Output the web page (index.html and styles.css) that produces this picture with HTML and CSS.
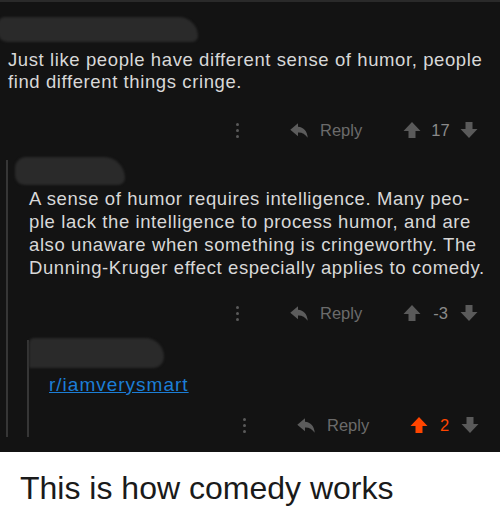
FILE: index.html
```html
<!DOCTYPE html>
<html>
<head>
<meta charset="utf-8">
<link rel="stylesheet" href="styles.css">
</head>
<body>
<div class="dark">
  <div class="comment c1">
    <div class="blob blob1"></div>
    <p class="text">Just like people have different sense of humor, people find different things cringe.</p>
    <div class="actions">
      <span class="dots"><i></i><i></i><i></i></span>
      <span class="reply"><svg class="ricon" viewBox="0 0 18 15"><path d="M8 0.3 L0.3 6.8 L8 13.3 L8 9.6 C12 9.4 15 11 17.7 14.8 C17.5 8.5 13.5 4.2 8 3.8 Z" fill="#5c5c5c"/></svg>Reply</span>
      <span class="vote"><svg class="arrow" viewBox="0 0 18 18"><path d="M9 1 L17.5 10 L12.5 10 L12.5 17 L5.5 17 L5.5 10 L0.5 10 Z" fill="#5a5a5a"/></svg><span class="score">17</span><svg class="arrow" viewBox="0 0 18 18"><path d="M9 17 L17.5 8 L12.5 8 L12.5 1 L5.5 1 L5.5 8 L0.5 8 Z" fill="#5a5a5a"/></svg></span>
    </div>
    <div class="comment c2">
      <div class="blob blob2"></div>
      <p class="text">A sense of humor requires intelligence. Many peo&shy;ple lack the intelligence to process humor, and are also unaware when something is cringeworthy. The Dunning-Kruger effect especially applies to comedy.</p>
      <div class="actions a2">
        <span class="dots"><i></i><i></i><i></i></span>
        <span class="reply"><svg class="ricon" viewBox="0 0 18 15"><path d="M8 0.3 L0.3 6.8 L8 13.3 L8 9.6 C12 9.4 15 11 17.7 14.8 C17.5 8.5 13.5 4.2 8 3.8 Z" fill="#5c5c5c"/></svg>Reply</span>
        <span class="vote"><svg class="arrow" viewBox="0 0 18 18"><path d="M9 1 L17.5 10 L12.5 10 L12.5 17 L5.5 17 L5.5 10 L0.5 10 Z" fill="#5a5a5a"/></svg><span class="score">-3</span><svg class="arrow" viewBox="0 0 18 18"><path d="M9 17 L17.5 8 L12.5 8 L12.5 1 L5.5 1 L5.5 8 L0.5 8 Z" fill="#5a5a5a"/></svg></span>
      </div>
      <div class="comment c3">
        <div class="blob blob3"></div>
        <a class="link">r/iamverysmart</a>
        <div class="actions a3">
          <span class="dots"><i></i><i></i><i></i></span>
          <span class="reply"><svg class="ricon" viewBox="0 0 18 15"><path d="M8 0.3 L0.3 6.8 L8 13.3 L8 9.6 C12 9.4 15 11 17.7 14.8 C17.5 8.5 13.5 4.2 8 3.8 Z" fill="#5c5c5c"/></svg>Reply</span>
          <span class="vote"><svg class="arrow" viewBox="0 0 18 18"><path d="M9 1 L17.5 10 L12.5 10 L12.5 17 L5.5 17 L5.5 10 L0.5 10 Z" fill="#ff4500"/></svg><span class="score up">2</span><svg class="arrow" viewBox="0 0 18 18"><path d="M9 17 L17.5 8 L12.5 8 L12.5 1 L5.5 1 L5.5 8 L0.5 8 Z" fill="#5a5a5a"/></svg></span>
        </div>
      </div>
    </div>
  </div>
</div>
<p class="caption">This is how comedy works</p>
</body>
</html>
```
FILE: styles.css
```css
html, body {
  margin: 0;
  padding: 0;
  background: #ffffff;
}
.dark {
  background: #131313;
  border-top: 2px solid #2a2a2a;
  height: 450px;
  overflow: hidden;
  font-family: "Liberation Sans", Arial, sans-serif;
}
.comment {
  display: flex;
  flex-direction: column;
}
.c1 {
  padding: 15px 0 0 8px;
}
.c2 {
  margin-left: -2px;
  border-left: 2px solid #363636;
  padding-left: 21px;
  margin-top: 18px;
}
.c3 {
  margin-left: -2px;
  border-left: 2px solid #363636;
  margin-top: 15px;
  padding-left: 20px;
}
.blob {
  background: #2a2a2a;
  border-radius: 14px 40px 12px 20px;
  filter: blur(1px);
}
.blob1 {
  width: 200px;
  height: 25px;
  margin-left: -10px;
}
.blob2 {
  width: 110px;
  height: 28px;
  margin-left: -14px;
  margin-top: -3px;
  border-radius: 16px 30px 10px 14px;
}
.blob3 {
  width: 135px;
  height: 30px;
  margin-left: -20px;
  margin-top: -2px;
  border-radius: 8px 30px 18px 2px;
}
.text {
  margin: 7px 0 0 0;
  color: #d8d8d8;
  font-size: 18.5px;
  letter-spacing: 0.6px;
  line-height: 22px;
  hyphens: manual;
}
.c2 .text {
  margin-top: 2px;
  line-height: 23px;
  width: 457.5px;
}
.actions {
  display: flex;
  align-items: center;
  height: 24px;
  margin-top: 25px;
  color: #6b6b6b;
  font-size: 16.5px;
}
.a2 {
  margin-top: 22px;
}
.a3 {
  margin-top: 18px;
}
.dots {
  display: flex;
  flex-direction: column;
  gap: 3px;
  margin-left: 228px;
  width: 3px;
}
.c2 .dots { margin-left: 207px; }
.c3 .dots { margin-left: 194px; }
.dots i {
  display: block;
  width: 3px;
  height: 3px;
  border-radius: 50%;
  background: #5a5a5a;
}
.reply {
  display: flex;
  align-items: center;
  margin-left: 51px;
  width: 113px;
}
.ricon {
  width: 18px;
  height: 15px;
  margin-right: 12px;
}
.vote {
  display: flex;
  align-items: center;
}
.arrow {
  width: 18px;
  height: 18px;
}
.score {
  width: 39px;
  text-align: center;
  color: #8a8a8a;
}
.c3 .score {
  width: 33px;
}
.score.up {
  color: #ff4500;
}
.link {
  color: #1c7ed6;
  text-decoration: underline;
  font-size: 19px;
  letter-spacing: 1px;
  line-height: 20px;
  margin-top: 7px;
}
.caption {
  margin: 18px 0 0 20px;
  font-family: "Liberation Sans", Arial, sans-serif;
  font-size: 32px;
  color: #1a1a1a;
}
```
